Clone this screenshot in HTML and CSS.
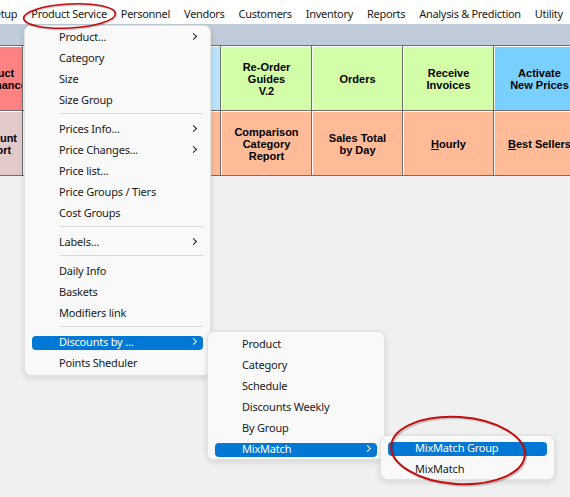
FILE: index.html
```html
<!DOCTYPE html>
<html lang="en">
<head>
    <meta charset="UTF-8">
    <title>Back Office</title>
    <link rel="stylesheet" href="styles.css">
</head>
<body>
    <!-- Main menu bar -->
    <div class="menubar">
        <span class="menubar-item">Setup</span>
        <span class="menubar-item">Product Service</span>
        <span class="menubar-item">Personnel</span>
        <span class="menubar-item">Vendors</span>
        <span class="menubar-item">Customers</span>
        <span class="menubar-item">Inventory</span>
        <span class="menubar-item">Reports</span>
        <span class="menubar-item">Analysis &amp; Prediction</span>
        <span class="menubar-item">Utility</span>
    </div>

    <div class="toolbar-band"></div>

    <!-- Shortcut buttons -->
    <div class="button-grid">
        <div class="tile red"><span>Product<br>Maintenance</span></div>
        <div class="tile yellow"></div>
        <div class="tile sky"></div>
        <div class="tile green"><span>Re-Order<br>Guides<br>V.2</span></div>
        <div class="tile green"><span>Orders</span></div>
        <div class="tile green"><span>Receive<br>Invoices</span></div>
        <div class="tile blue"><span>Activate<br>New Prices</span></div>

        <div class="tile rose"><span>Discount<br>Report</span></div>
        <div class="tile salmon"></div>
        <div class="tile salmon"></div>
        <div class="tile salmon"><span>Comparison<br>Category<br>Report</span></div>
        <div class="tile salmon"><span>Sales Total<br>by Day</span></div>
        <div class="tile salmon"><span><u>H</u>ourly</span></div>
        <div class="tile salmon"><span><u>B</u>est Sellers</span></div>
    </div>

    <!-- Product Service drop-down -->
    <div class="popup popup-main">
        <div class="popup-item has-sub">Product...</div>
        <div class="popup-item">Category</div>
        <div class="popup-item">Size</div>
        <div class="popup-item">Size Group</div>
        <div class="popup-sep"></div>
        <div class="popup-item has-sub">Prices Info...</div>
        <div class="popup-item has-sub">Price Changes...</div>
        <div class="popup-item">Price list...</div>
        <div class="popup-item">Price Groups / Tiers</div>
        <div class="popup-item">Cost Groups</div>
        <div class="popup-sep"></div>
        <div class="popup-item has-sub">Labels...</div>
        <div class="popup-sep"></div>
        <div class="popup-item">Daily Info</div>
        <div class="popup-item">Baskets</div>
        <div class="popup-item">Modifiers link</div>
        <div class="popup-sep"></div>
        <div class="popup-item has-sub active">Discounts by ...</div>
        <div class="popup-item">Points Sheduler</div>
    </div>

    <!-- Discounts by ... -->
    <div class="popup popup-discounts">
        <div class="popup-item">Product</div>
        <div class="popup-item">Category</div>
        <div class="popup-item">Schedule</div>
        <div class="popup-item">Discounts Weekly</div>
        <div class="popup-item">By Group</div>
        <div class="popup-item has-sub active">MixMatch</div>
    </div>

    <!-- MixMatch -->
    <div class="popup popup-mixmatch">
        <div class="popup-item active">MixMatch Group</div>
        <div class="popup-item">MixMatch</div>
    </div>

    <!-- Hand-drawn marker rings -->
    <svg class="marks" width="570" height="497" viewBox="0 0 570 497">
        <g fill="none" stroke-width="2">
            <ellipse cx="70.5" cy="17" rx="46" ry="12" stroke="rgba(0,0,0,0.18)" transform="rotate(-3 70.5 17)"/>
            <ellipse cx="69.5" cy="16" rx="46" ry="12" stroke="#c30d0d" stroke-width="1.6" transform="rotate(-3 69.5 16)"/>
            <ellipse cx="459.5" cy="452" rx="67" ry="33.5" stroke="rgba(0,0,0,0.18)" transform="rotate(4 459.5 452)"/>
            <ellipse cx="458" cy="450.5" rx="67" ry="33.5" stroke="#c30d0d" transform="rotate(4 458 450.5)"/>
        </g>
    </svg>
</body>
</html>
```

FILE: styles.css
```css
body {
    margin: 0;
    width: 570px;
    height: 497px;
    overflow: hidden;
    position: relative;
    background-color: #f0f0f0;
    font-family: "Noto Sans", "Open Sans", sans-serif;
    color: #1a1a1a;
}

/* Menu bar */
.menubar {
    display: flex;
    height: 24px;
    padding-top: 4px;
    box-sizing: border-box;
    margin-left: -18px;
    background-color: #ffffff;
    font-size: 11px;
    line-height: 20px;
    white-space: nowrap;
}

.menubar-item {
    padding: 0 7px;
    letter-spacing: -0.3px;
}

.toolbar-band {
    height: 21px;
    background-color: #bfcbd8;
}

/* Button tiles */
.button-grid {
    display: grid;
    grid-template-columns: 58px 106px repeat(5, 90px);
    grid-template-rows: 64px 64px;
    gap: 1px;
    padding: 1px 0;
    margin-left: -36px;
    width: max-content;
    background-color: #6f6f6f;
}

.tile {
    display: flex;
    flex-direction: column;
    align-items: center;
    justify-content: center;
    overflow: hidden;
    border-top: 1px solid #f8f8f8;
    border-left: 1px solid #f8f8f8;
    font-family: "Liberation Sans", Arial, sans-serif;
    font-weight: bold;
    font-size: 11px;
    line-height: 12px;
    color: #000000;
    text-align: center;
    white-space: nowrap;
}

.tile.red { background-color: #ff8282; }
.tile.rose { background-color: #e2caca; }
.tile.yellow { background-color: #fff0a8; }
.tile.sky { background-color: #b9e4fc; }
.tile.green { background-color: #d4fda7; }
.tile.blue { background-color: #79d0ff; }
.tile.salmon { background-color: #ffbb98; }

/* Popup menus */
.popup {
    position: absolute;
    box-sizing: border-box;
    background-color: #f9f9f9;
    border: 1px solid #e2e2e2;
    border-radius: 7px;
    box-shadow: 0 2px 6px rgba(0, 0, 0, 0.12);
    font-size: 11px;
    letter-spacing: -0.2px;
    white-space: nowrap;
}

.popup-main {
    left: 24px;
    top: 25px;
    width: 187px;
    padding: 0 0 2px;
}

.popup-discounts {
    left: 207px;
    top: 331px;
    width: 178px;
    padding: 1px 0 0;
}

.popup-mixmatch {
    left: 380px;
    top: 435px;
    width: 175px;
    padding: 1px 0 0;
}

.popup-item {
    position: relative;
    z-index: 0;
    height: 21px;
    line-height: 21px;
    padding-left: 34px;
}

.popup-item::before {
    content: "";
    position: absolute;
    z-index: -1;
    left: 7px;
    right: 7px;
    top: 5px;
    height: 14px;
    border-radius: 4px;
}

.popup-item.active {
    color: #ffffff;
}

.popup-item.active::before {
    background-color: #0078d4;
}

.popup-item.has-sub::after {
    content: "";
    position: absolute;
    right: 14px;
    top: 8px;
    width: 4px;
    height: 4px;
    border-top: 1px solid currentColor;
    border-right: 1px solid currentColor;
    transform: rotate(45deg);
}

.popup-sep {
    height: 1px;
    margin: 3px 7px 4px 35px;
    background-color: #d9d9d9;
}

.marks {
    position: absolute;
    left: 0;
    top: 0;
    pointer-events: none;
}
```
